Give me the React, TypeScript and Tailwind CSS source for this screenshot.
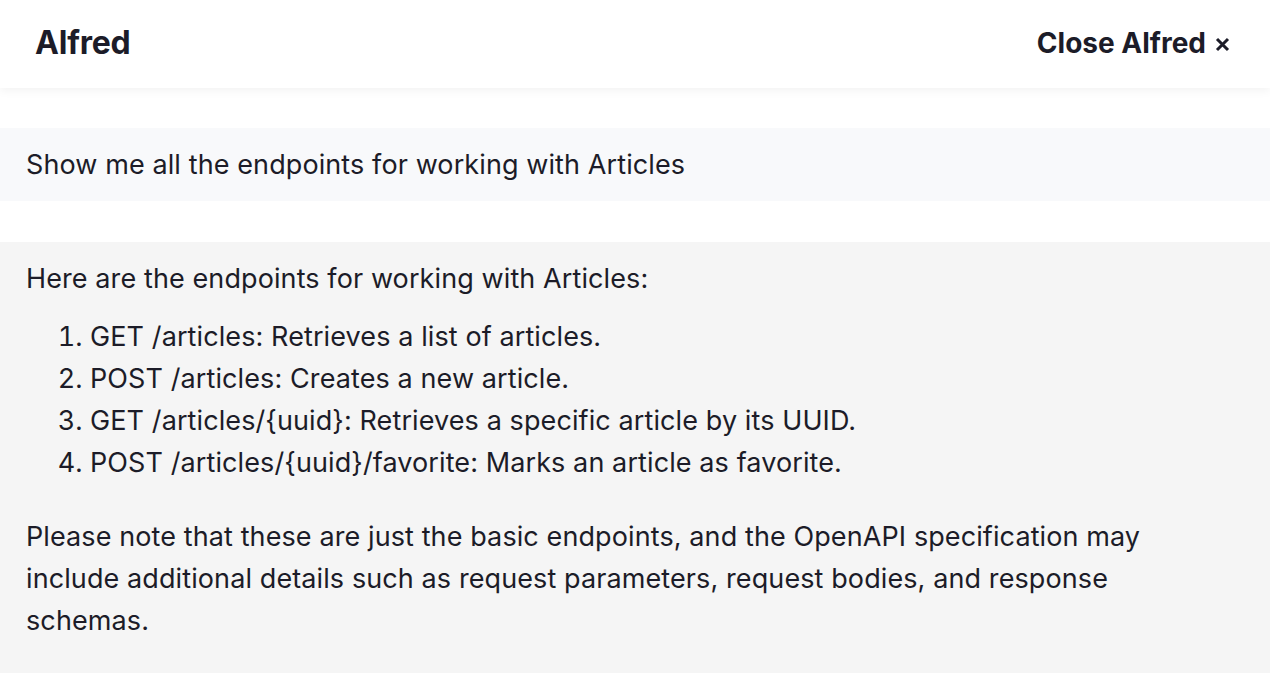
export default function App() {
  return (
    <div className="min-h-[690px] bg-white text-[#1c1c28]" style={{ fontFamily: 'Inter, "Noto Sans", sans-serif' }}>
      <header className="h-[88px] flex items-center justify-between pl-[35px] pr-[40px] pb-[2px] bg-white shadow-[0_2px_10px_rgba(0,0,0,0.06)] relative">
        <h1 className="text-[32px] font-bold tracking-[-0.2px]">Alfred</h1>
        <button className="text-[28px] font-bold flex items-center gap-[9px] tracking-[0px]">
          Close Alfred
          <svg width="15" height="15" viewBox="0 0 15 15" className="mt-[2px]">
            <path d="M2 2 L13 13 M13 2 L2 13" stroke="#1c1c28" strokeWidth="3" strokeLinecap="butt" />
          </svg>
        </button>
      </header>
      <main className="pt-[40px] flex flex-col gap-[41px] text-[27px] leading-[42px] tracking-[0.1px]">
        <div className="bg-[#f8f9fb] px-[26px] pt-[16px] pb-[15px]">
          Show me all the endpoints for working with Articles
        </div>
        <div className="bg-[#f5f5f5] pl-[26px] pr-[52px] pt-[16px] pb-[31px]">
          <p>Here are the endpoints for working with Articles:</p>
          <ol className="list-decimal pl-[64px] mt-[16px] mb-[32px]">
            <li>GET /articles: Retrieves a list of articles.</li>
            <li>POST /articles: Creates a new article.</li>
            <li>GET /articles/{'{uuid}'}: Retrieves a specific article by its UUID.</li>
            <li>POST /articles/{'{uuid}'}/favorite: Marks an article as favorite.</li>
          </ol>
          <p>
            Please note that these are just the basic endpoints, and the OpenAPI specification may include additional
            details such as request parameters, request bodies, and response schemas.
          </p>
        </div>
      </main>
    </div>
  );
}
